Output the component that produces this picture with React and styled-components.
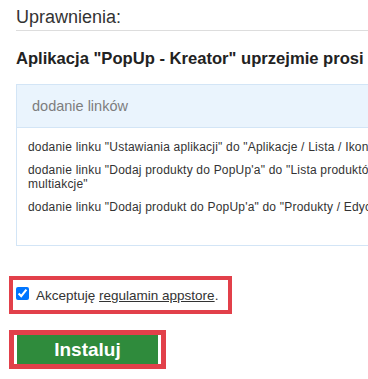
import React from "react";
import styled, { createGlobalStyle } from "styled-components";

const GlobalStyle = createGlobalStyle`
  html, body {
    margin: 0;
    padding: 0;
    overflow: hidden;
    background: #ffffff;
  }
  body {
    font-family: "Liberation Sans", Arial, sans-serif;
    color: #333333;
  }
`;

const Page = styled.div`
  width: 760px;
  padding: 0 0 0 9px;
  box-sizing: border-box;
`;

const Permissions = styled.section`
  margin-left: 7px;
`;

const Title = styled.h3`
  margin: 0;
  padding: 7px 0 2px;
  font-size: 18px;
  line-height: 21px;
  font-weight: normal;
  color: #333333;
  border-bottom: 1px solid #dddddd;
`;

const Heading = styled.h4`
  margin: 18px 0 16px;
  font-size: 16.6px;
  line-height: 19px;
  font-weight: bold;
  color: #222222;
  white-space: nowrap;
`;

const PermBox = styled.div`
  width: 450px;
  box-sizing: border-box;
  border: 1px solid #d3e5f6;
  background: #ffffff;
`;

const BoxHeader = styled.div`
  height: 42px;
  display: flex;
  align-items: center;
  padding: 0 15px;
  background: #eaf4fd;
  border-bottom: 1px solid #d3e5f6;
  color: #7d7d7d;
  font-size: 14.5px;
`;

const BoxBody = styled.div`
  padding: 12px 11px 31px;
`;

const Item = styled.p`
  margin: 0 0 9px;
  font-size: 12px;
  letter-spacing: 0.2px;
  line-height: 14px;
  color: #333333;
  &:last-child {
    margin-bottom: 0;
  }
`;

const AcceptBox = styled.label`
  margin-top: 30px;
  width: 223px;
  height: 38px;
  box-sizing: border-box;
  border: 4px solid #e2404a;
  display: flex;
  align-items: center;
  padding-left: 3px;
  font-size: 13.5px;
  color: #333333;
`;

const Check = styled.input`
  width: 13px;
  height: 13px;
  margin: -3px 7px 0 0;
  flex-shrink: 0;
`;

const TermsLink = styled.a`
  color: #333333;
  text-decoration: underline;
`;

const ButtonBox = styled.div`
  margin-top: 16px;
  width: 157px;
  box-sizing: border-box;
  border: 5px solid #e2404a;
  display: flex;
`;

const InstallButton = styled.button`
  flex: 1;
  height: 29px;
  padding: 0;
  border: 0;
  border-left: 3px solid #ffffff;
  border-right: 3px solid #ffffff;
  background: #2f8b3c;
  color: #ffffff;
  font-family: "Liberation Sans", Arial, sans-serif;
  font-size: 19px;
  font-weight: bold;
  line-height: 29px;
  cursor: pointer;
`;

export default function App() {
  return (
    <>
      <GlobalStyle />
      <Page>
        <Permissions>
          <Title>Uprawnienia:</Title>
          <Heading>Aplikacja "PopUp - Kreator" uprzejmie prosi o dostęp do:</Heading>
          <PermBox>
            <BoxHeader>dodanie linków</BoxHeader>
            <BoxBody>
              <Item>dodanie linku "Ustawiania aplikacji" do "Aplikacje / Lista / Ikona"</Item>
              <Item>dodanie linku "Dodaj produkty do PopUp'a" do "Lista produktów / Akcje / multiakcje"</Item>
              <Item>dodanie linku "Dodaj produkt do PopUp'a" do "Produkty / Edycja"</Item>
            </BoxBody>
          </PermBox>
        </Permissions>
        <AcceptBox>
          <Check type="checkbox" defaultChecked />
          <span>
            Akceptuję <TermsLink href="#regulamin">regulamin appstore</TermsLink>.
          </span>
        </AcceptBox>
        <ButtonBox>
          <InstallButton type="button">Instaluj</InstallButton>
        </ButtonBox>
      </Page>
    </>
  );
}
